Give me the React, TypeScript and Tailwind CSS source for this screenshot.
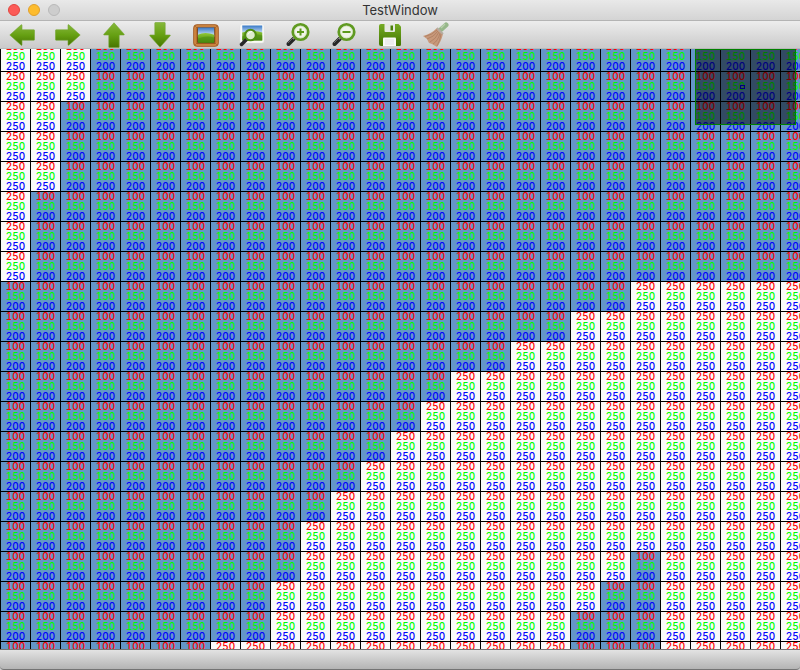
import React from "react";

type RowSpec = { blue: [number, number][] };

const COLUMNS = 27;

// Ranges of blue cells per row, as [first, last) column
const rows: RowSpec[] = [
  { blue: [[3, 27]] },
  { blue: [[3, 27]] },
  { blue: [[2, 27]] },
  { blue: [[2, 27]] },
  { blue: [[2, 27]] },
  { blue: [[1, 27]] },
  { blue: [[1, 27]] },
  { blue: [[1, 27]] },
  { blue: [[0, 21]] },
  { blue: [[0, 19]] },
  { blue: [[0, 17]] },
  { blue: [[0, 15]] },
  { blue: [[0, 14]] },
  { blue: [[0, 13]] },
  { blue: [[0, 12]] },
  { blue: [[0, 11]] },
  { blue: [[0, 10]] },
  { blue: [[0, 10], [21, 22]] },
  { blue: [[0, 9], [20, 22]] },
  { blue: [[0, 9], [19, 22]] },
  { blue: [[0, 7], [19, 22]] },
];

function Cell({ blue }: { blue: boolean }) {
  const [r, g, b] = blue ? [100, 150, 200] : [250, 250, 250];
  return (
    <td
      className={`h-[30px] w-[30px] border-l border-t border-black p-0 text-center align-top ${
        blue ? "bg-[#6496c8]" : "bg-[#fafafa]"
      }`}
    >
      <div className="h-[10px] text-[#ff0000]">{r}</div>
      <div className="h-[10px] text-[#00ff00]">{g}</div>
      <div className="h-[9px] text-[#0000ff]">{b}</div>
    </td>
  );
}

function Arrow({ turn }: { turn: number }) {
  return (
    <svg viewBox="0 0 26 26" className="size-[26px]">
      <defs>
        <linearGradient
          id={`arrow${turn}`}
          x1="0"
          y1="0"
          x2="0"
          y2="1"
          gradientTransform={`rotate(${-turn} .5 .5)`}
        >
          <stop offset="0" stopColor="#86b83a" />
          <stop offset=".5" stopColor="#66a013" />
          <stop offset="1" stopColor="#477500" />
        </linearGradient>
      </defs>
      <path
        transform={`rotate(${turn} 13 13)`}
        d="M.8 13 12.2 2.8Q13 2.4 13 3.4V7.8H25Q25.5 7.8 25.5 8.4V17.6Q25.5 18.2 25 18.2H13V22.8Q13 23.7 12.2 23.2Z"
        fill={`url(#arrow${turn})`}
        stroke="#76a636"
        strokeWidth=".6"
      />
    </svg>
  );
}

function Landscape({ id }: { id: string }) {
  return (
    <>
      <defs>
        <linearGradient id={`${id}sky`} x2="0" y2="1">
          <stop offset="0" stopColor="#3678c8" />
          <stop offset="1" stopColor="#e9f5fb" />
        </linearGradient>
        <linearGradient id={`${id}land`} x2="0" y2="1">
          <stop offset="0" stopColor="#91c934" />
          <stop offset="1" stopColor="#417f0b" />
        </linearGradient>
      </defs>
      <path d="M5 5H21V14H5Z" fill={`url(#${id}sky)`} />
      <path d="M5 12Q12 9 21 12V20H5Z" fill={`url(#${id}land)`} />
      <path d="M5 16Q14 12 21 15V20H5Z" fill="#4d9013" opacity=".6" />
    </>
  );
}

function FrameIcon() {
  return (
    <svg viewBox="0 0 26 26" className="size-[26px]">
      <rect x=".7" y="2.7" width="24.6" height="21.6" rx="3" fill="#ba6d2c" stroke="#a5602a" />
      <rect x="2" y="4" width="22" height="19" rx="2" fill="none" stroke="#da9851" />
      <rect x="4" y="5.5" width="18" height="16" fill="#7a4216" />
      <g transform="translate(-.2 .4) scale(1.02 1.02)">
        <Landscape id="frame" />
      </g>
      <path d="M2 4l3 3M24 4l-3 3M2 23l3-3M24 23l-3-3" stroke="#a05a22" strokeWidth=".6" />
    </svg>
  );
}

function ViewIcon() {
  return (
    <svg viewBox="0 0 26 26" className="size-[26px]">
      <rect x="1" y="2" width="24" height="19" rx="2" fill="#fbfbf7" stroke="#ddd" strokeWidth=".5" />
      <g transform="translate(-3 -1.5) scale(1.25 1)">
        <Landscape id="view" />
      </g>
      <path d="M8 17 2.5 22.5" stroke="#282828" strokeWidth="3.5" strokeLinecap="round" />
      <circle cx="11.5" cy="13" r="5.3" fill="#dcebcb" stroke="#4f8d12" strokeWidth="2" />
      <path d="M9 12.5q1-3 4-3" fill="none" stroke="#fff" />
    </svg>
  );
}

function Magnifier({ plus }: { plus: boolean }) {
  return (
    <svg viewBox="0 0 26 26" className="size-[26px]">
      <path d="M9 16.5 3.5 22" stroke="#262626" strokeWidth="4" strokeLinecap="round" />
      <path d="m8 16-5 5" stroke="#777" strokeWidth=".8" />
      <path d="m11 14-3 3" stroke="#888" strokeWidth="2" />
      <circle cx="15.5" cy="10" r="7.7" fill="#f0f5e8" stroke="#5f9a20" strokeWidth="2.8" />
      <circle cx="15.5" cy="10" r="6" fill="none" stroke="#c8d9b1" strokeWidth=".7" />
      <path
        d={plus ? "M12 10h7M15.5 6.5v7" : "M11.5 10h8"}
        stroke="#5c9a1c"
        strokeWidth="2"
      />
    </svg>
  );
}

function SaveIcon() {
  return (
    <svg viewBox="0 0 26 26" className="size-[26px]">
      <defs>
        <linearGradient id="disk" x2="0" y2="1">
          <stop offset="0" stopColor="#75ab24" />
          <stop offset="1" stopColor="#437600" />
        </linearGradient>
      </defs>
      <path
        d="M4 2H21.5L24 4.5V22.5Q24 24 22.5 24H4Q2 24 2 22V4Q2 2 4 2Z"
        fill="url(#disk)"
      />
      <path d="M7.5 2h10.5v7q0 1-1 1H8.500q-1 0-1-1Z" fill="#e5e8e2" />
      <rect x="13.5" y="3.5" width="2.5" height="5" fill="#4b800a" />
      <path d="M6 24v-7.500q0-1 1-1h11q1 0 1 1v7.500Z" fill="#fafafa" />
      <path d="M8 18h9M8 20h9M8 22h9" stroke="#d6d6d6" strokeWidth=".7" />
    </svg>
  );
}

function BroomIcon() {
  return (
    <svg viewBox="0 0 26 26" className="size-[26px]">
      <path d="m18 7.500 5-4.500" stroke="#96b78a" strokeWidth="5" strokeLinecap="round" />
      <path d="m18 6 4-4" stroke="#b9d0ad" strokeWidth="1.4" />
      <path d="M14 6 20 12Q18 20 14 25L9 22 6 21 4 17 0 14Q8 12 14 6Z" fill="#c8987a" />
      <path
        d="M14 8Q9 13 2 14.5M15 9Q11 15 4 17M16 10Q13 17 7 20M17 11Q15 19 10 22M18 12Q17 19 14 24"
        fill="none"
        stroke="#a87a5c"
        strokeWidth=".7"
      />
      <path d="m14 6 6 6" stroke="#b5aca0" strokeWidth="2" />
    </svg>
  );
}

const tools = [
  { name: "Pan left", icon: <Arrow turn={0} /> },
  { name: "Pan right", icon: <Arrow turn={180} /> },
  { name: "Pan up", icon: <Arrow turn={90} /> },
  { name: "Pan down", icon: <Arrow turn={270} /> },
  { name: "Fit window", icon: <FrameIcon /> },
  { name: "Original size", icon: <ViewIcon /> },
  { name: "Zoom in", icon: <Magnifier plus /> },
  { name: "Zoom out", icon: <Magnifier plus={false} /> },
  { name: "Save", icon: <SaveIcon /> },
  { name: "Clear", icon: <BroomIcon /> },
];

export default function App() {
  return (
    <div className="flex h-screen flex-col overflow-hidden bg-[#d0d0d0] font-['Inter',sans-serif]">
      <header className="grid h-[21px] shrink-0 grid-cols-[1fr_auto_1fr] items-center border-b border-[#b4b4b4] bg-linear-to-b from-[#e9e9e9] to-[#d4d4d4]">
        <div className="flex gap-2 pl-2">
          <button aria-label="Close" className="size-3 rounded-full border border-[#e2463f] bg-[#fc5b57]" />
          <button aria-label="Minimize" className="size-3 rounded-full border border-[#e0a02c] bg-[#fdbc2e]" />
          <button aria-label="Zoom" disabled className="size-3 rounded-full border border-[#b9b9b9] bg-[#cdcdcd]" />
        </div>
        <h1 className="text-[13px] leading-5 text-[#333]">TestWindow</h1>
      </header>
      <div
        role="toolbar"
        className="flex h-7 shrink-0 items-center gap-5 border-b border-[#b8b8b8] bg-linear-to-b from-[#ededed] to-[#cacaca] pl-[9px]"
      >
        {tools.map((t) => (
          <button key={t.name} aria-label={t.name} className="shrink-0">
            {t.icon}
          </button>
        ))}
      </div>
      <main className="relative flex min-h-0 flex-1 flex-col justify-start overflow-hidden">
        <table className="-mt-2 w-[810px] shrink-0 table-fixed border-separate border-spacing-0 text-[10px] font-medium tabular-nums leading-[9px]">
          <tbody>
            {rows.map((row, y) => (
              <tr key={y}>
                {Array.from({ length: COLUMNS }, (_, x) => (
                  <Cell key={x} blue={row.blue.some(([a, b]) => x >= a && x < b)} />
                ))}
              </tr>
            ))}
          </tbody>
        </table>
        <div className="absolute right-1 top-0 h-[76px] w-[101px] border border-[#008000] bg-black/50">
          <div className="absolute left-11 top-[35px] h-1 w-[5px] border border-[#000080]" />
        </div>
      </main>
      <footer className="h-[21px] shrink-0 rounded-b border-b border-t border-[#747474] bg-linear-to-b from-[#e3e3e3] to-[#b4b4b4]" />
    </div>
  );
}
